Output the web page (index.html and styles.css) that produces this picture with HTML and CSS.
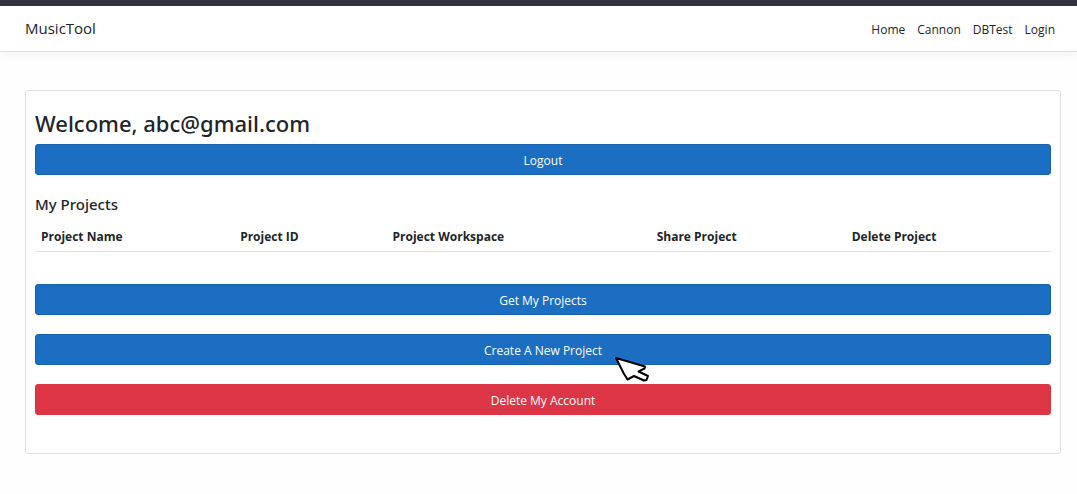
FILE: index.html
```html
<!DOCTYPE html>
<html lang="en">
<head>
<meta charset="utf-8">
<meta name="viewport" content="width=device-width, initial-scale=1">
<title>MusicTool</title>
<link rel="stylesheet" href="styles.css">
</head>
<body>
<header class="navbar">
  <a class="brand" href="#">MusicTool</a>
  <nav class="nav-links">
    <a href="#">Home</a>
    <a href="#">Cannon</a>
    <a href="#">DBTest</a>
    <a href="#">Login</a>
  </nav>
</header>
<main class="card">
  <h1 class="welcome">Welcome, abc@gmail.com</h1>
  <button class="btn" type="button">Logout</button>
  <h2 class="section-title">My Projects</h2>
  <table class="projects">
    <colgroup>
      <col class="col-name"><col class="col-id"><col class="col-workspace"><col class="col-share"><col class="col-delete">
    </colgroup>
    <thead>
      <tr>
        <th scope="col">Project Name</th>
        <th scope="col">Project ID</th>
        <th scope="col">Project Workspace</th>
        <th scope="col">Share Project</th>
        <th scope="col">Delete Project</th>
      </tr>
    </thead>
  </table>
  <div class="actions">
    <button class="btn" type="button">Get My Projects</button>
    <div class="pointed">
      <button class="btn" type="button">Create A New Project</button>
      <svg class="pointer" width="36" height="26" viewBox="0 0 36 26" aria-hidden="true">
        <path d="M2 2L31 10.500L30.500 12.500L24.500 15.500L34 20L32.500 24L30 24.500L20 20L13.500 23.500L9.500 17Z" fill="#fff" stroke="#000" stroke-width="2" stroke-linejoin="round"/>
      </svg>
    </div>
    <button class="btn btn-danger" type="button">Delete My Account</button>
  </div>
</main>
</body>
</html>
```
FILE: styles.css
```css
* {
  box-sizing: border-box;
}

body {
  margin: 0;
  background: #fefefe;
  color: #212529;
  font: 12px/20px "Segoe UI", "Open Sans", "Noto Sans", sans-serif;
}

.navbar {
  display: flex;
  align-items: center;
  justify-content: space-between;
  height: 52px;
  padding: 0 22px 0 25px;
  border-top: 6px solid #2f3342;
  border-bottom: 1px solid #dee2e6;
  background: #fff;
  box-shadow: 0 3px 10px rgba(0, 0, 0, 0.05);
}

.navbar a {
  color: #212529;
  text-decoration: none;
}

.navbar .brand {
  font-size: 15px;
  line-height: 22px;
  padding-bottom: 2px;
}

.nav-links {
  display: flex;
  gap: 12px;
  padding-top: 2px;
}

.card {
  margin: 38px 16px 40px 25px;
  padding: 18px 9px 38px;
  border: 1px solid #dfdfdf;
  border-radius: 3px;
  background: #fff;
}

.welcome {
  margin: 0 0 7px;
  font-family: "Segoe UI", "Noto Sans", "Open Sans", sans-serif;
  font-size: 22px;
  font-weight: 500;
  line-height: 28px;
}

.section-title {
  margin: 19px 0 7px;
  font-family: "Segoe UI", "Noto Sans", "Open Sans", sans-serif;
  font-size: 15px;
  font-weight: 500;
  line-height: 20px;
}

.btn {
  display: block;
  width: 100%;
  height: 31px;
  padding: 2px 10px 0;
  border: 1px solid #1861ac;
  border-radius: 3px;
  background: #1b6ec2;
  color: #fff;
  font: inherit;
}

.btn-danger {
  border-color: #dc3545;
  background: #dc3545;
}

.projects {
  width: 100%;
  border-collapse: collapse;
  table-layout: fixed;
}

.projects th {
  padding: 6px 6px 4px;
  border-bottom: 1px solid #dee2e6;
  font-weight: 700;
  text-align: left;
}

.col-name { width: 19.6%; }
.col-id { width: 15%; }
.col-workspace { width: 26%; }
.col-share { width: 19.2%; }
.col-delete { width: 20.2%; }

.actions {
  display: flex;
  flex-direction: column;
  gap: 19px;
  margin-top: 32px;
}

.pointed {
  position: relative;
}

.pointer {
  position: absolute;
  top: 22px;
  left: 57%;
}
```
